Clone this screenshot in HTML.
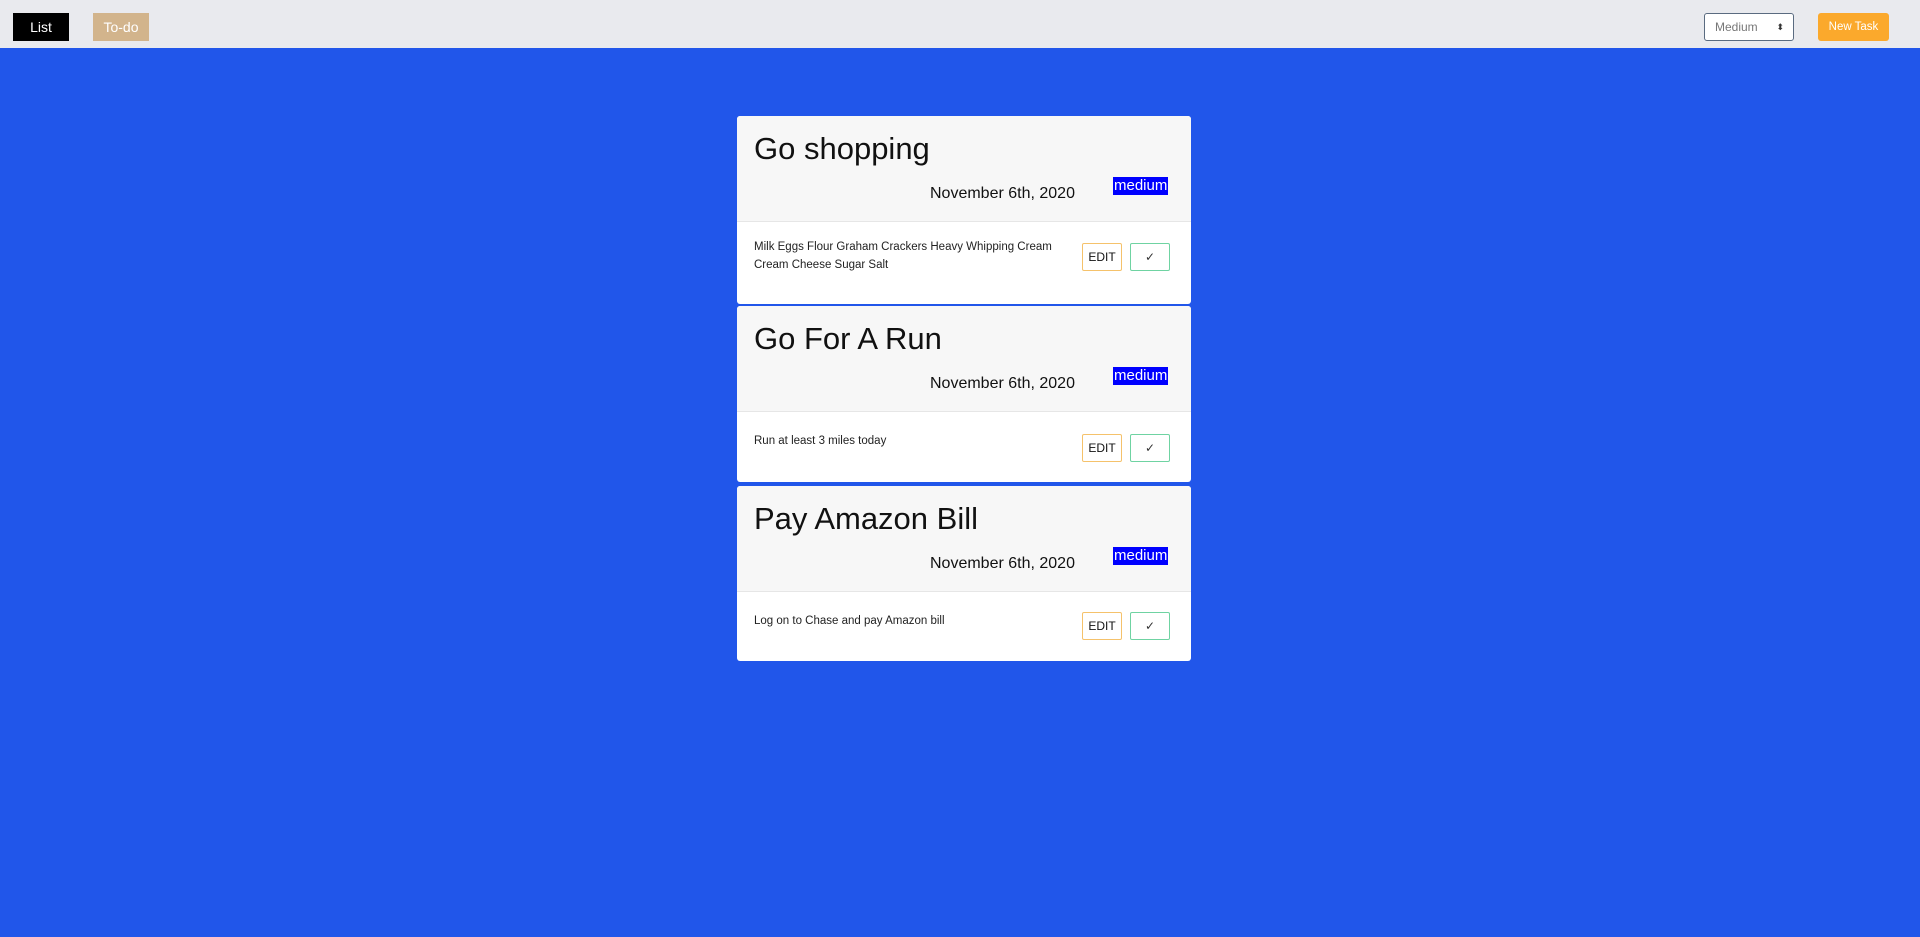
<!DOCTYPE html>
<html><head><style>
*{box-sizing:border-box;margin:0;padding:0}
body{width:1920px;height:937px;background:#2156ea;font-family:"Liberation Sans",sans-serif;position:relative;overflow:hidden}
.nav{position:absolute;left:0;top:0;width:1920px;height:48px;background:#e9eaee}
.b{position:absolute;top:13px;height:28px;font-size:14px;line-height:28px;text-align:center}
.card{position:absolute;left:737px;width:454px;background:#fff;border-radius:3px;overflow:hidden}
.hd{position:absolute;left:0;top:0;width:100%;height:106px;background:#f7f7f7;border-bottom:1px solid #e6e6e6}
.t{position:absolute;left:17px;top:15px;font-size:31px;color:#111}
.d{position:absolute;left:193px;top:69px;font-size:16px;color:#111}
.m{position:absolute;left:376px;top:61px;background:#0000ff;color:#fff;font-size:15px;line-height:18px;padding:0 1px}
.ds{position:absolute;left:17px;top:126px;width:320px;font-size:11.5px;line-height:18px;color:#222}
.e{position:absolute;left:345px;top:127px;width:40px;height:28px;border:1px solid #f5c26b;border-radius:2px;font-size:12px;line-height:26px;text-align:center;color:#111}
.c{position:absolute;left:393px;top:127px;width:40px;height:28px;border:1px solid #6fd3a2;border-radius:2px;font-size:12px;line-height:26px;text-align:center;color:#333}
</style></head><body>
<div class="nav">
<div class="b" style="left:13px;width:56px;background:#000;color:#fff;font-size:14px">List</div>
<div class="b" style="left:93px;width:56px;background:#d2b48c;color:#fff;font-size:14px">To-do</div>
<div class="b" style="left:1704px;width:90px;background:#fff;border:1px solid #5a6b80;border-radius:3px;color:#777;font-size:12px;text-align:left;padding-left:10px;line-height:26px">Medium<span style="position:absolute;right:9px;color:#333;font-size:9px">&#x2B0D;</span></div>
<div class="b" style="left:1818px;width:71px;background:#fba92c;color:#fff;border-radius:3px;font-size:11.5px">New Task</div>
</div>
<div class="card" style="top:116px;height:188px">
<div class="hd"><div class="t">Go shopping</div><div class="d">November 6th, 2020</div><div class="m">medium</div></div>
<div class="ds" style="top:122px">Milk Eggs Flour Graham Crackers Heavy Whipping Cream Cream Cheese Sugar Salt</div>
<div class="e">EDIT</div><div class="c">✓</div></div>
<div class="card" style="top:306px;height:176px">
<div class="hd"><div class="t">Go For A Run</div><div class="d">November 6th, 2020</div><div class="m">medium</div></div>
<div class="ds">Run at least 3 miles today</div>
<div class="e" style="top:128px">EDIT</div><div class="c" style="top:128px">✓</div></div>
<div class="card" style="top:486px;height:175px">
<div class="hd"><div class="t">Pay Amazon Bill</div><div class="d">November 6th, 2020</div><div class="m">medium</div></div>
<div class="ds">Log on to Chase and pay Amazon bill</div>
<div class="e" style="top:126px">EDIT</div><div class="c" style="top:126px">✓</div></div>
</body></html>
